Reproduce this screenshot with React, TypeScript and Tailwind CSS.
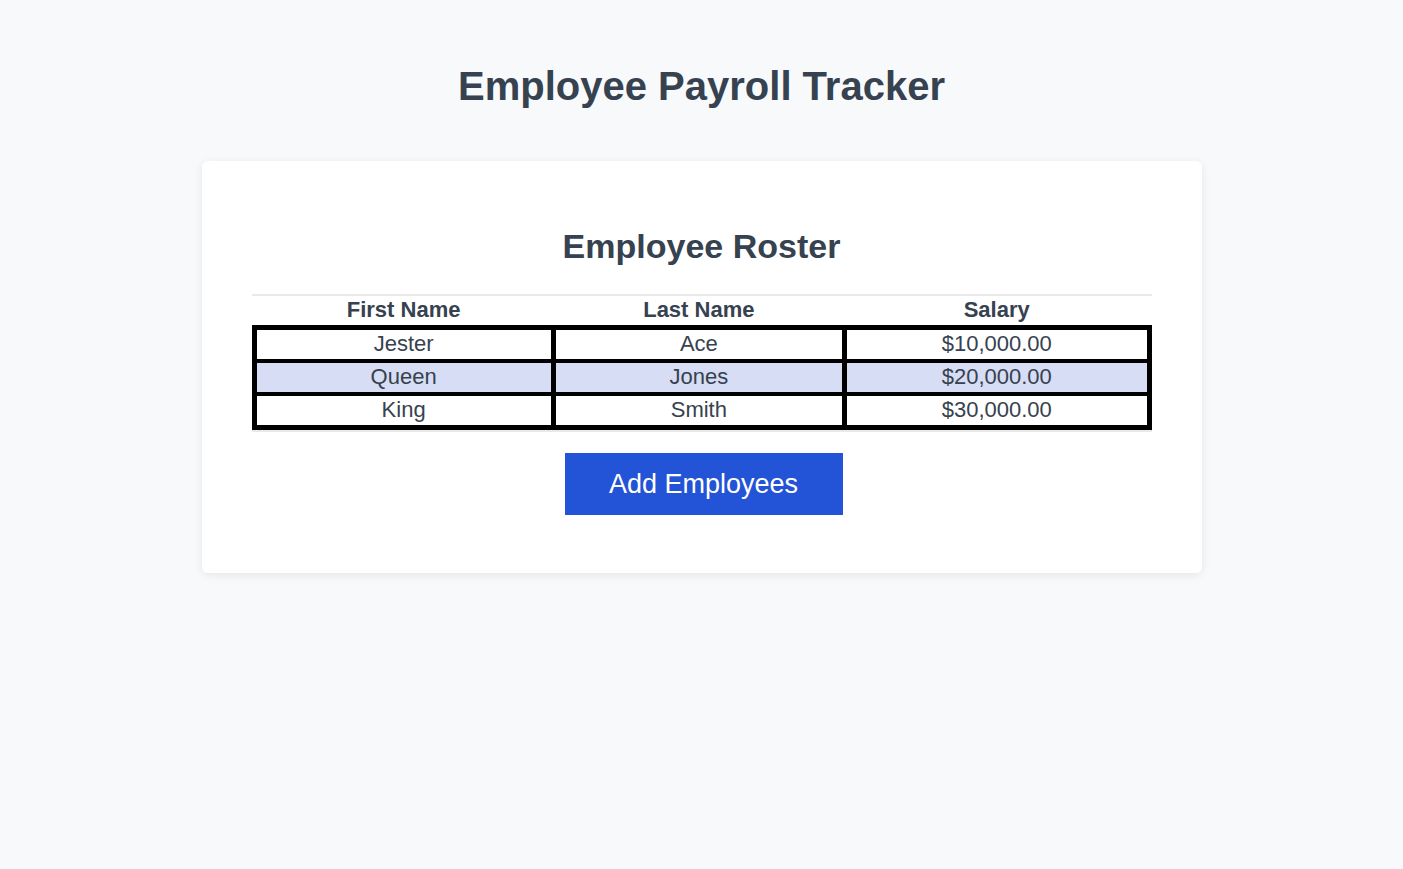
const employees = [
  { first: "Jester", last: "Ace", salary: 10000 },
  { first: "Queen", last: "Jones", salary: 20000 },
  { first: "King", last: "Smith", salary: 30000 },
];

function fmtSalary(value: number): string {
  return value.toLocaleString("en-US", { style: "currency", currency: "USD" });
}

export default function App() {
  return (
    <div className="min-h-screen bg-[#f8f9fb] pt-[63px] font-['Liberation_Sans',Arial,sans-serif] text-[#36424f]">
      <h1 className="text-center text-[40px] font-bold leading-[46px]">Employee Payroll Tracker</h1>

      <div className="mx-auto mt-[52px] w-[1000px] rounded-md bg-white px-[50px] pb-[58px] pt-[65px] shadow-[0_2px_10px_rgba(0,0,0,0.08)]">
        <h2 className="text-center text-[34px] font-bold leading-[40px]">Employee Roster</h2>

        <div className="mt-[28px] border-y-2 border-[#e9e9e9]">
          <table className="w-full border-collapse text-center text-[22px]">
            <thead>
              <tr>
                <th className="w-[301px] pb-[3px] pt-[1px] font-bold leading-[25px]">First Name</th>
                <th className="w-[293px] pb-[3px] pt-[1px] font-bold leading-[25px]">Last Name</th>
                <th className="w-[306px] pb-[3px] pt-[1px] font-bold leading-[25px]">Salary</th>
              </tr>
            </thead>
            <tbody>
              {employees.map((e, i) => {
                const edge = i === 0 ? "border-t-[5px]" : i === employees.length - 1 ? "border-b-[5px]" : "";
                const cell = `border-x-[5px] border-y-4 border-black pb-[3px] pt-[1px] leading-[25px] ${edge}`;
                return (
                  <tr key={e.first} className={i % 2 === 1 ? "bg-[#d6ddf5]" : "bg-white"}>
                    <td className={cell}>{e.first}</td>
                    <td className={cell}>{e.last}</td>
                    <td className={cell}>{fmtSalary(e.salary)}</td>
                  </tr>
                );
              })}
            </tbody>
          </table>
        </div>

        <div className="mt-[21px] flex justify-center pl-[4px]">
          <button className="h-[62px] w-[278px] bg-[#2353d6] text-[27px] text-white">Add Employees</button>
        </div>
      </div>
    </div>
  );
}
